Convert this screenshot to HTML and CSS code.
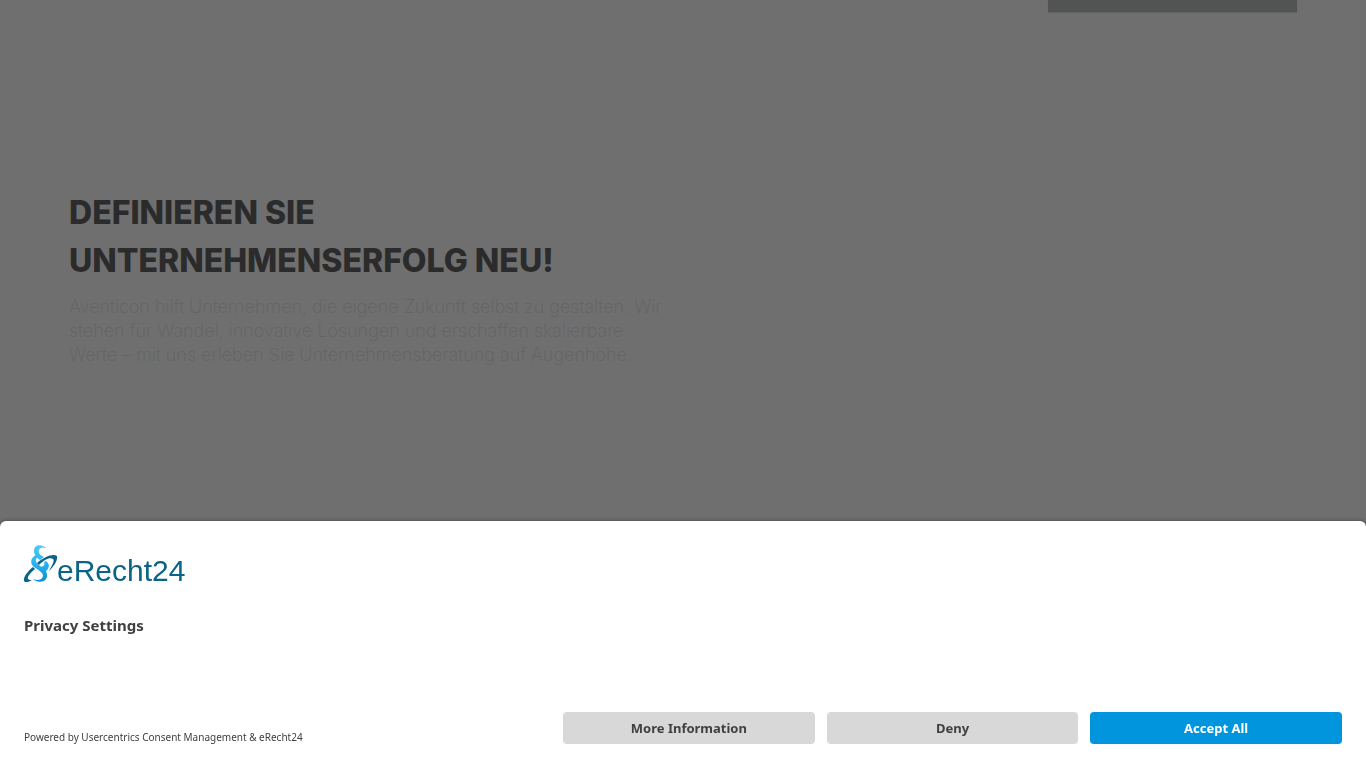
FILE: index.html
```
<!DOCTYPE html>
<html lang="de">
<head>
    <meta charset="UTF-8">
    <meta name="viewport" content="width=device-width, initial-scale=1.0">
    <title>Aventicon Unternehmensberatung</title>
    <link rel="stylesheet" href="styles.css">
</head>
<body>

<main class="page">
    <div class="teaser"></div>
    <section class="intro">
        <h1>Definieren Sie Unternehmenserfolg neu!</h1>
        <p>Aventicon hilft Unternehmen, die eigene Zukunft selbst zu gestalten. Wir stehen für Wandel, innovative Lösungen und erschaffen skalierbare Werte – mit uns erleben Sie Unternehmensberatung auf Augenhöhe.</p>
    </section>
</main>

<div class="overlay"></div>

<div class="consent" role="dialog" aria-labelledby="consent-title">
    <svg class="logo" width="162" height="40" viewBox="0 0 162 40" role="img" aria-label="eRecht24">
        <defs>
            <linearGradient id="blau" gradientUnits="userSpaceOnUse" x1="0" y1="0" x2="0" y2="37">
                <stop offset="0" stop-color="#4fcbf5"/>
                <stop offset="0.5" stop-color="#2bb2ee"/>
                <stop offset="1" stop-color="#0590d9"/>
            </linearGradient>
        </defs>
        <path fill="#0a6487" d="M8 35C5 37 1 38 0 36C-1 32 4 26 9 22L11 24C6 28 3 32 4 34C5 35 7 35 8 35Z"/>
        <path fill="url(#blau)" d="M22 3C18 -1 10 -1 10 6C10 10 13 13 16 15L20 12C16 10 14 8 15 5C16 2 19 2 22 3Z"/>
        <path fill="url(#blau)" d="M12 10C6 13 6 19 10 22C14 25 19 27 19 31C18 35 14 36 9 34C13 38 21 38 23 32C24 26 19 23 15 20C11 17 11 14 14 12Z"/>
        <path fill="url(#blau)" d="M22 16C26 19 26 23 21 27C20 25 19 24 17 22C20 21 21 20 20 17Z"/>
        <path fill="#0a6487" d="M13 18C20 12 29 8 33 11C34 16 29 22 25 26C28 20 31 16 29 14C26 12 20 15 15 20Z"/>
        <text class="logo-text" x="33" y="36">eRecht24</text>
    </svg>
    <h2 id="consent-title">Privacy Settings</h2>
    <div class="consent-footer">
        <p class="powered">Powered by Usercentrics Consent Management &amp; eRecht24</p>
        <div class="buttons">
            <button type="button">More Information</button>
            <button type="button">Deny</button>
            <button type="button" class="accept">Accept All</button>
        </div>
    </div>
</div>

</body>
</html>
```
FILE: styles.css
```
* {
    box-sizing: border-box;
}
body {
    margin: 0;
    background-color: #fff;
    font-family: "Noto Sans", sans-serif;
}
.page {
    min-height: 100vh;
    padding: 0 69px;
    font-family: Inter, sans-serif;
    font-optical-sizing: none;
}
.teaser {
    width: 249px;
    height: 12px;
    margin-left: auto;
    background-color: #bac2be;
    box-shadow: 0 1px 1px rgba(0, 0, 0, 0.1);
}
.intro {
    max-width: 600px;
    padding-top: 177px;
}
.intro h1 {
    margin: 0 0 10px;
    color: #646464;
    font-size: 32px;
    font-weight: 800;
    line-height: 48px;
    text-transform: uppercase;
}
.intro p {
    margin: 0;
    color: #e4e4e4;
    font-size: 18px;
    font-weight: 200;
    line-height: 24px;
}
.overlay {
    position: fixed;
    inset: 0;
    background-color: rgba(0, 0, 0, 0.565);
}
.consent {
    position: fixed;
    left: 0;
    right: 0;
    bottom: 0;
    padding: 24px;
    border-radius: 6px 6px 0 0;
    background-color: #fff;
    color: #404040;
    box-shadow: 0 0 4px rgba(0, 0, 0, 0.4);
}
.logo {
    display: block;
    overflow: visible;
}
.logo-text {
    fill: #0a6487;
    font-family: "Liberation Sans", Arial, sans-serif;
    font-size: 30px;
}
.consent h2 {
    margin: 28px 0 75px;
    font-size: 15px;
    line-height: 24px;
}
.consent-footer {
    display: flex;
    align-items: flex-end;
    justify-content: space-between;
}
.powered {
    margin: 0;
    font-size: 10px;
    line-height: 14px;
}
.buttons {
    display: grid;
    grid-template-columns: repeat(3, 1fr);
    gap: 12px;
    width: 59.1%;
}
.buttons button {
    height: 32px;
    padding: 0;
    border: none;
    border-radius: 4px;
    background-color: #d8d8d8;
    color: #404040;
    font-family: inherit;
    font-size: 13px;
    font-weight: 700;
}
.buttons .accept {
    background-color: #0095dc;
    color: #fff;
}
```
